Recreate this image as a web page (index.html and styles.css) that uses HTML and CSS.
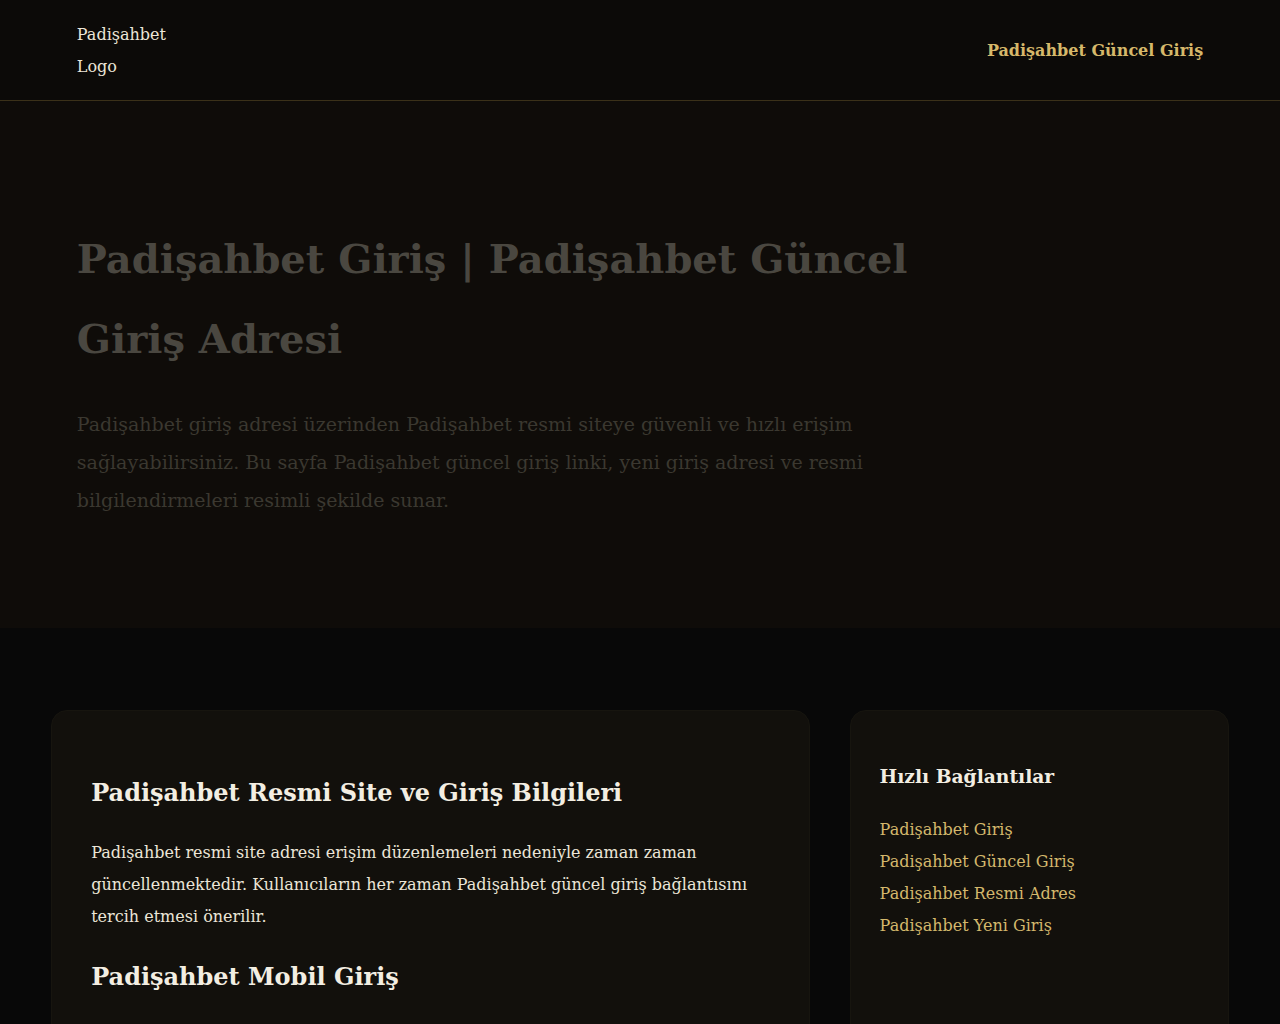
FILE: index.html
```html
<!DOCTYPE html>
<html lang="tr">
<head>
<meta charset="utf-8">
<title>Padişahbet Giriş | Padişahbet Güncel Giriş Adresi</title>
<link rel="stylesheet" href="styles.css">
</head>
<body>
<header class="site-header">
  <a class="logo" href="#">Padişahbet Logo</a>
  <nav class="nav">
    <a class="nav-link" href="#">Padişahbet Güncel Giriş</a>
  </nav>
</header>

<section class="hero">
  <div class="hero-inner">
    <h1 class="hero-title">Padişahbet Giriş | Padişahbet Güncel Giriş Adresi</h1>
    <p class="hero-text">Padişahbet giriş adresi üzerinden Padişahbet resmi siteye güvenli ve hızlı erişim sağlayabilirsiniz. Bu sayfa Padişahbet güncel giriş linki, yeni giriş adresi ve resmi bilgilendirmeleri resimli şekilde sunar.</p>
  </div>
</section>

<main class="content">
  <article class="card main-card">
    <h2 class="card-title">Padişahbet Resmi Site ve Giriş Bilgileri</h2>
    <p class="card-text">Padişahbet resmi site adresi erişim düzenlemeleri nedeniyle zaman zaman güncellenmektedir. Kullanıcıların her zaman Padişahbet güncel giriş bağlantısını tercih etmesi önerilir.</p>
    <h2 class="card-title">Padişahbet Mobil Giriş</h2>
    <p class="card-text">Padişahbet mobil giriş seçeneği sayesinde akıllı telefon ve tabletlerden siteye kolayca ulaşabilirsiniz.</p>
  </article>

  <aside class="card side-card">
    <h3 class="side-title">Hızlı Bağlantılar</h3>
    <ul class="side-links">
      <li><a href="#">Padişahbet Giriş</a></li>
      <li><a href="#">Padişahbet Güncel Giriş</a></li>
      <li><a href="#">Padişahbet Resmi Adres</a></li>
      <li><a href="#">Padişahbet Yeni Giriş</a></li>
    </ul>
  </aside>
</main>
</body>
</html>
```

FILE: styles.css
```css
* {
  box-sizing: border-box;
}

body {
  margin: 0;
  background: #080808;
  color: #ece6d8;
  font-family: "DejaVu Serif", Georgia, serif;
  font-size: 16px;
  line-height: 2;
}

a {
  text-decoration: none;
}

/* Header */
.site-header {
  display: flex;
  align-items: center;
  justify-content: space-between;
  padding: 19px 6% 17px;
  background: #0c0a08;
  border-bottom: 1px solid #3b3119;
}

.logo {
  display: block;
  width: 100px;
  color: #ece6d8;
}

.nav-link {
  color: #d6b86a;
  font-weight: bold;
}

/* Hero */
.hero {
  background: #0f0c09;
  padding: 118px 6% 109px;
}

.hero-inner {
  max-width: 900px;
}

.hero-title {
  margin: 0 0 26px;
  font-size: 40px;
  line-height: 80px;
  color: #4a4740;
}

.hero-text {
  margin: 0;
  font-size: 19px;
  line-height: 38px;
  color: #3b3830;
}

/* Content */
.content {
  display: grid;
  grid-template-columns: 2fr 1fr;
  gap: 40px;
  padding: 82px 4% 60px;
}

.card {
  background: #12100c;
  border: 1px solid #17150f;
  border-radius: 16px;
}

.main-card {
  padding: 39px;
}

.card-title {
  margin: 21px 0 22px;
  font-size: 24px;
  line-height: 44px;
  color: #f3eee2;
}

.card-text {
  margin: 22px 0;
}

.side-card {
  padding: 29px;
}

.side-title {
  margin: 18px 0 19px;
  font-size: 18.7px;
  line-height: 37px;
  color: #f3eee2;
}

.side-links {
  list-style: none;
  margin: 0;
  padding: 0;
}

.side-links a {
  color: #d4b86c;
}
```
